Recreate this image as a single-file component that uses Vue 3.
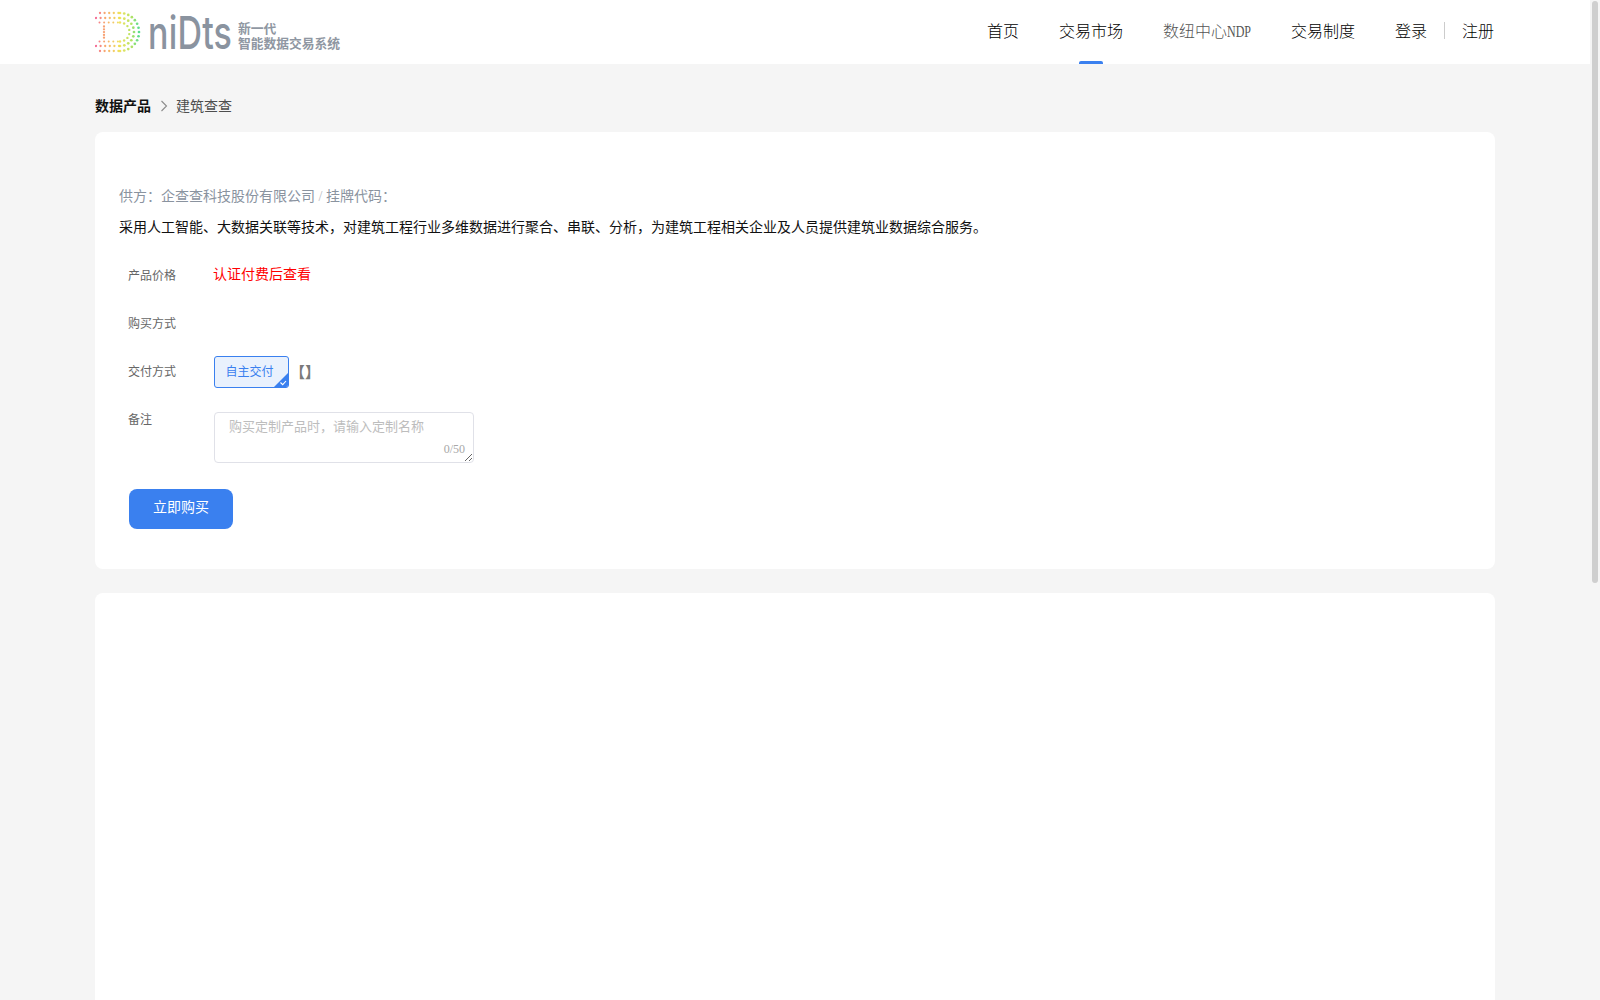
<script setup>
import { ref } from "vue";

const navItems = [
    { label: "首页" },
    { label: "交易市场", active: true },
    { label: "数纽中心", suffix: "NDP", muted: true },
    { label: "交易制度" },
];

const remark = ref("");

// colour of a logo dot, from its x position: pink > orange > yellow > green
function dotColor(x) {
    const stops = [
        [96, [242, 84, 130]],
        [106, [247, 160, 80]],
        [120, [236, 222, 70]],
        [131, [170, 222, 70]],
        [139, [62, 214, 122]],
    ];
    for (let i = 1; i < stops.length; i++) {
        if (x <= stops[i][0]) {
            const t = Math.max(0, (x - stops[i - 1][0]) / (stops[i][0] - stops[i - 1][0]));
            const a = stops[i - 1][1];
            const b = stops[i][1];
            return `rgb(${a.map((v, k) => Math.round(v + (b[k] - v) * t)).join(",")})`;
        }
    }
    return "rgb(62,214,122)";
}

function makeDots() {
    const dots = [];
    const cx = 120;
    const cy = 32;
    const rings = [
        { r: 19, start: 100, size: 1.15 },
        { r: 14, start: 96, size: 1.15 },
        { r: 9.5, start: 99.5, size: 1 },
    ];
    rings.forEach((ring) => {
        for (let x = ring.start; x < cx - 1; x += 4.6) {
            dots.push({ x, y: cy - ring.r, s: ring.size });
            dots.push({ x, y: cy + ring.r, s: ring.size });
        }
        const steps = Math.round((Math.PI * ring.r) / 4.2);
        for (let i = 0; i <= steps; i++) {
            const a = -Math.PI / 2 + (Math.PI * i) / steps;
            dots.push({ x: cx + ring.r * Math.cos(a), y: cy + ring.r * Math.sin(a), s: ring.size + 0.2 });
        }
    });
    // inner stem of the D
    for (let y = 26.5; y <= 38; y += 2.8) {
        dots.push({ x: 104, y, s: 1.15 });
    }
    return dots.map((d) => ({ ...d, c: dotColor(d.x) }));
}

const dots = makeDots();
</script>

<template>
    <div class="page">
        <header class="topbar">
            <div class="topbar-inner">
                <div class="logo">
                    <svg class="logo-mark" width="140" height="64" viewBox="95 0 140 64">
                        <circle v-for="(d, i) in dots" :key="i" :cx="d.x" :cy="d.y" :r="d.s" :fill="d.c" opacity="0.85" />
                        <text transform="translate(148 49) scale(1 1.34)" class="logo-word">niDts</text>
                    </svg>
                    <div class="logo-text">
                        <span>新一代</span>
                        <span>智能数据交易系统</span>
                    </div>
                </div>
                <nav class="nav">
                    <a
                        v-for="item in navItems"
                        :key="item.label"
                        class="nav-item"
                        :class="{ active: item.active, muted: item.muted }"
                    >{{ item.label }}<span v-if="item.suffix" class="nav-suffix"><span>{{ item.suffix }}</span></span></a>
                    <div class="auth">
                        <a class="nav-item">登录</a>
                        <i class="auth-line"></i>
                        <a class="nav-item">注册</a>
                    </div>
                </nav>
            </div>
        </header>

        <main class="main">
            <div class="crumbs">
                <b>数据产品</b>
                <svg width="8" height="12" viewBox="0 0 8 12" class="crumb-arrow">
                    <path d="M1.5 1 L6.5 6 L1.5 11" fill="none" stroke="#8c8c8c" stroke-width="1.1" />
                </svg>
                <span>建筑查查</span>
            </div>

            <section class="card card-info">
                <p class="supplier">供方：企查查科技股份有限公司 <em>/</em> 挂牌代码：</p>
                <p class="desc">采用人工智能、大数据关联等技术，对建筑工程行业多维数据进行聚合、串联、分析，为建筑工程相关企业及人员提供建筑业数据综合服务。</p>

                <div class="form-row row-price">
                    <label>产品价格</label>
                    <div class="price">认证付费后查看</div>
                </div>
                <div class="form-row row-buy">
                    <label>购买方式</label>
                </div>
                <div class="form-row row-delivery">
                    <label>交付方式</label>
                    <div class="tag">
                        自主交付
                        <svg class="tag-check" width="16" height="16" viewBox="0 0 16 16">
                            <path d="M16 0 V14 Q16 16 14 16 H0 Z" fill="#3a80ef" />
                            <path d="M7.5 10.5 L9.7 12.6 L13 9" fill="none" stroke="#fff" stroke-width="1.1" />
                        </svg>
                    </div>
                    <span class="brackets">【】</span>
                </div>
                <div class="form-row row-remark">
                    <label>备注</label>
                    <div class="remark">
                        <textarea v-model="remark" placeholder="购买定制产品时，请输入定制名称"></textarea>
                        <span class="count">{{ remark.length }}/50</span>
                    </div>
                </div>
                <button class="buy">立即购买</button>
            </section>

            <section class="card card-detail"></section>
        </main>

        <div class="scroll-thumb"></div>
    </div>
</template>

<style scoped>
.page {
    width: 1590px;
    font-family: "Liberation Serif", "Noto Sans CJK SC", serif;
    color: #1d2129;
}

.topbar {
    height: 64px;
    background: #fff;
}

.topbar-inner {
    width: 1400px;
    height: 64px;
    margin: 0 auto;
    display: flex;
    justify-content: space-between;
    align-items: center;
}

.logo {
    display: flex;
    align-items: center;
}

.logo-mark {
    display: block;
    flex: none;
}

.logo-word {
    font-family: Inter, sans-serif;
    font-size: 34px;
    font-weight: 500;
    letter-spacing: 0.2px;
    fill: #8a939f;
}

.logo-text {
    margin-left: 3px;
    padding-top: 6px;
    display: flex;
    flex-direction: column;
    font-family: "Noto Sans CJK SC", sans-serif;
    font-size: 12.75px;
    line-height: 15px;
    font-weight: 700;
    color: #8f97a2;
}

.nav {
    display: flex;
    align-items: center;
    gap: 40px;
    height: 64px;
    margin-right: 1px;
}

.nav-item {
    position: relative;
    display: block;
    font-size: 16px;
    font-weight: 300;
    line-height: 64px;
    color: #000;
    white-space: nowrap;
}

.nav-item.muted {
    color: #555;
}

/* the latin part is drawn much narrower in this header */
.nav-suffix {
    display: inline-block;
    width: 24px;
}

.nav-suffix span {
    display: inline-block;
    transform: scaleX(0.75);
    transform-origin: left center;
}

.nav-item.active::after {
    content: "";
    position: absolute;
    left: 50%;
    bottom: 0;
    width: 24px;
    height: 3px;
    margin-left: -12px;
    border-radius: 2px 2px 0 0;
    background: #3a80ef;
}

.auth {
    display: flex;
    align-items: center;
}

.auth-line {
    display: block;
    width: 1px;
    height: 17px;
    margin: -4px 17px 0;
    background: #cccccc;
}

.main {
    width: 1400px;
    margin: 0 auto;
    padding-bottom: 24px;
}

.crumbs {
    display: flex;
    align-items: center;
    height: 68px;
    padding-top: 14px;
    box-sizing: border-box;
    font-size: 14px;
    color: #4e4e4e;
}

.crumbs b {
    color: #111;
}

.crumb-arrow {
    margin: 1px 8px 0 9px;
}

.card {
    background: #fff;
    border-radius: 8px;
}

.card-info {
    height: 437px;
    padding: 55px 24px 0;
    box-sizing: border-box;
}

.card-detail {
    height: 1098px;
    margin-top: 24px;
}

.supplier {
    margin: 0;
    font-size: 14px;
    line-height: 20px;
    color: #8a939f;
}

.supplier em {
    font-style: normal;
    color: #b8bcc4;
}

.desc {
    margin: 11px 0 0;
    font-size: 14px;
    line-height: 20px;
    color: #111;
}

.form-row {
    display: flex;
    align-items: center;
    padding-left: 9px;
}

.form-row label {
    flex: none;
    width: 86px;
    margin-top: -2px;
    font-size: 12px;
    color: #666;
}

.row-price {
    height: 24px;
    margin-top: 26px;
}

.row-buy {
    height: 24px;
    margin-top: 24px;
}

.row-delivery {
    margin-top: 20px;
}

.row-remark {
    margin-top: 24px;
    align-items: flex-start;
}

.row-remark label {
    margin-top: 0;
    line-height: 16px;
}

.price {
    margin-top: -7px;
    margin-left: -1px;
    font-size: 14px;
    color: #ff0000;
}

.tag {
    position: relative;
    width: 75px;
    height: 32px;
    box-sizing: border-box;
    padding-right: 4px;
    border: 1px solid #3a80ef;
    border-radius: 3px;
    background: #e9f1fd;
    color: #3a80ef;
    font-size: 12px;
    line-height: 30px;
    text-align: center;
    overflow: hidden;
}

.tag-check {
    position: absolute;
    right: -1px;
    bottom: -1px;
}

.brackets {
    margin: -2px 0 0 1px;
    font-size: 15px;
    font-weight: 700;
    color: #7a7a7a;
}

.remark {
    position: relative;
    width: 260px;
    height: 51px;
}

.remark textarea {
    display: block;
    width: 260px;
    height: 51px;
    box-sizing: border-box;
    padding: 5px 14px;
    border: 1px solid #e0e1e8;
    border-radius: 4px;
    outline: none;
    font-family: inherit;
    font-size: 13px;
    line-height: 18px;
    color: #333;
}

.remark textarea::placeholder {
    color: #bdbdbd;
}

.count {
    position: absolute;
    right: 9px;
    bottom: 7px;
    font-size: 12px;
    line-height: 14px;
    color: #a8a8a8;
}

.buy {
    display: block;
    width: 104px;
    height: 40px;
    margin: 26px 0 0 10px;
    padding: 0 0 6px;
    border: none;
    border-radius: 8px;
    background: #3a80ef;
    color: #fff;
    font-family: inherit;
    font-size: 14px;
}

.scroll-thumb {
    position: fixed;
    top: 1px;
    right: 2px;
    width: 6px;
    height: 582px;
    border-radius: 3px;
    background: #cfcfcf;
}
</style>

<style>
html {
    background: #f5f5f5;
}

body {
    margin: 0;
    background: #f5f5f5;
}
</style>
